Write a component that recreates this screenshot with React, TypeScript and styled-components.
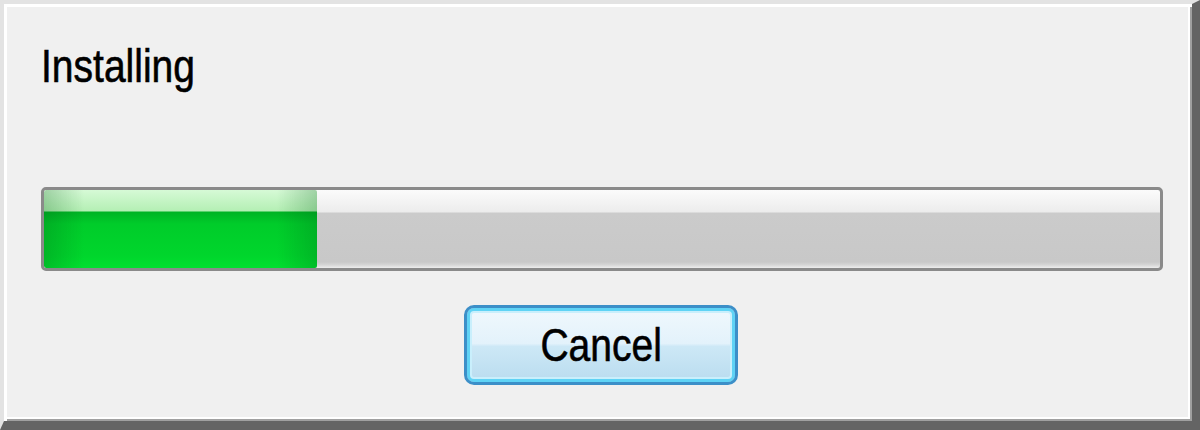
import React from "react";
import styled, { createGlobalStyle } from "styled-components";

const Global = createGlobalStyle`
  html, body { margin: 0; padding: 0; background: #f0f0f0; }
  #root { width: 1200px; height: 430px; }
`;

const Dialog = styled.div`
  box-sizing: border-box;
  width: 1200px;
  height: 430px;
  background: #f0f0f0;
  border-top: 4px solid #e3e3e3;
  border-left: 4px solid #e3e3e3;
  border-right: 8px solid #646464;
  border-bottom: 9px solid #646464;
  box-shadow: inset 3px 3px 0 #ffffff, inset -2px -2px 0 #a0a0a0,
    inset -4px -4px 0 #ffffff;
  padding: 38px 29px 0 37px;
  display: flex;
  flex-direction: column;
  font-family: "Liberation Sans", Arial, sans-serif;
  color: #000;
`;

const Label = styled.div`
  font-size: 47px;
  line-height: 47px;
  height: 47px;
`;

const NarrowText = styled.span<{ $origin: string }>`
  display: inline-block;
  transform: scaleX(0.83);
  transform-origin: ${(p) => p.$origin};
  -webkit-text-stroke: 0.6px #000;
`;

const Track = styled.div`
  margin-top: 98px;
  box-sizing: border-box;
  height: 84px;
  border: 3px solid #8a8a8a;
  border-radius: 5px;
  background: linear-gradient(
    to bottom,
    #fbfbfb 0px,
    #ececec 22px,
    #cbcbcb 23px,
    #c8c8c8 72px,
    #d6d6d6 75px,
    #ededed 78px
  );
  overflow: hidden;
  display: flex;
`;

const Fill = styled.div`
  height: 100%;
  border-radius: 2px;
  background:
    linear-gradient(
      to right,
      rgba(0, 90, 20, 0.25) 0px,
      rgba(0, 90, 20, 0) 40px,
      rgba(0, 90, 20, 0) calc(100% - 40px),
      rgba(0, 90, 20, 0.25) 100%
    ),
    linear-gradient(
      to bottom,
      #d6fad6 0px,
      #b4efb4 21px,
      #00b324 22px,
      #00cc2a 34px,
      #00d62c 66px,
      #00e030 78px
    );
`;

const Footer = styled.div`
  margin-top: 34px;
  display: flex;
  justify-content: center;
  padding-right: 2px;
`;

const Button = styled.button`
  box-sizing: border-box;
  width: 274px;
  height: 80px;
  border: 3px solid #3c8fc8;
  border-radius: 10px;
  box-shadow: inset 0 0 0 3px #5fd3f5, inset 0 0 0 5px #c9effc;
  background: linear-gradient(
    to bottom,
    #f0f8fd 0%,
    #e3f2fb 48%,
    #cde8f6 52%,
    #b9dcef 100%
  );
  font-family: "Liberation Sans", Arial, sans-serif;
  font-size: 47px;
  line-height: 47px;
  color: #000;
  padding: 0 0 2px 0;
  cursor: default;
`;

export default function App() {
  const progress = 24.5;
  return (
    <>
      <Global />
      <Dialog>
        <Label>
          <NarrowText $origin="left center">Installing</NarrowText>
        </Label>
        <Track>
          <Fill style={{ width: `${progress}%` }} />
        </Track>
        <Footer>
          <Button>
            <NarrowText $origin="center">Cancel</NarrowText>
          </Button>
        </Footer>
      </Dialog>
    </>
  );
}
